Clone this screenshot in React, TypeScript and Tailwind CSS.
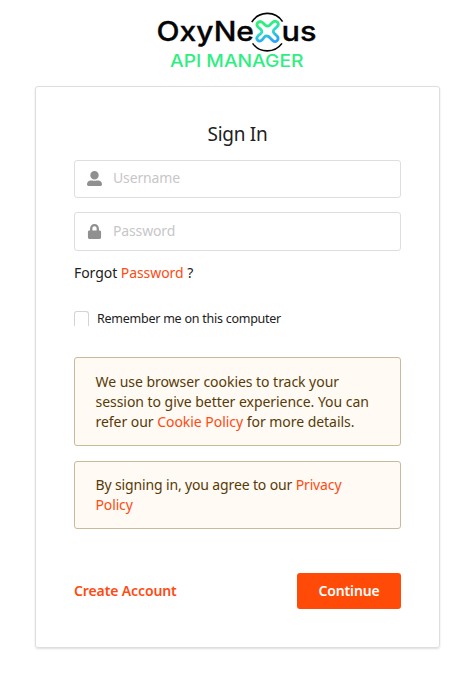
import { useState } from 'react';
import type { InputHTMLAttributes, ReactNode } from 'react';
import { FaLock, FaUserAlt } from 'react-icons/fa';

interface FieldProps extends InputHTMLAttributes<HTMLInputElement> {
  icon: ReactNode;
}

const Logo = () => (
  <svg width="166" height="60" viewBox="154 11 166 60" role="img" aria-label="OxyNexus API Manager">
    <defs>
      <linearGradient id="xFill" gradientUnits="userSpaceOnUse" x1="265" y1="22" x2="270" y2="41">
        <stop offset="0.1" stopColor="#2df07c" />
        <stop offset="0.5" stopColor="#2cdcc8" />
        <stop offset="0.95" stopColor="#2ca4fa" />
      </linearGradient>
    </defs>
    <g fontFamily="Inter, sans-serif" fontWeight="500" fontSize="27.5" fill="#050505" stroke="#050505" strokeWidth="0.3">
      <text x="156.5" y="40.7" textLength="97.5" lengthAdjust="spacingAndGlyphs">OxyNe</text>
      <text x="281.5" y="40.7" textLength="35" lengthAdjust="spacingAndGlyphs">us</text>
    </g>
    <g fill="none" stroke="#050505" strokeWidth="1.6">
      <path d="M251.8 22.2A18.2 18.2 0 0 1 282.6 21.6" />
      <path d="M252.6 43.4A18.2 18.2 0 0 0 282 43.4" />
    </g>
    <path
      d="M265.2 36.2L261.9 40.1C259 43 254.9 39 258 35.9L260.8 33.5Q263 31.5 260.8 29.4L258.3 27.2C255 24 259.2 19.6 262.5 22.5L265.3 25.1Q267.5 27 269.8 25.1L273 22.1C276.2 19.4 280.3 23.6 277 26.9L274.4 29.2Q272.2 31.2 274.2 33.3L277 36.1C280.2 39.3 275.7 43.4 272.7 40.5L270.2 38Q268 35.4 265.2 36.2"
      fill="none"
      stroke="url(#xFill)"
      strokeWidth="2.8"
      strokeLinecap="round"
      strokeLinejoin="round"
    />
    <text
      x="170"
      y="66.8"
      textLength="133.5"
      lengthAdjust="spacingAndGlyphs"
      fontFamily="Inter, sans-serif"
      fontWeight="500"
      fontSize="17"
      fill="#2fee82"
    >
      API MANAGER
    </text>
  </svg>
);

const Field = ({ icon, ...rest }: FieldProps) => (
  <div className="flex items-center rounded-[3px] border border-[#dededf] bg-white">
    <span className="flex w-[38px] pb-px pl-3 text-[#909090]">{icon}</span>
    <input
      {...rest}
      className="h-full min-w-0 flex-1 bg-transparent pb-[3px] text-[14px] tracking-[-0.15px] outline-none placeholder:text-[#c7c7c7]"
    />
  </div>
);

const Notice = ({ children }: { children: ReactNode }) => (
  <div className="rounded-[3px] border border-[#c9ba9b] bg-[#fffaf3] px-[20.5px] text-[14px] leading-5 text-[#573a08]">
    {children}
  </div>
);

const Link = ({ children }: { children: ReactNode }) => (
  <a href="#" className="text-[#ff4a12]">{children}</a>
);

const App = () => {
  const [remember, setRemember] = useState(false);

  return (
    <main className="flex h-[681px] w-[473px] flex-col bg-white pt-[11px] font-['Noto_Sans',sans-serif] text-[#212121]">
      <div className="ml-[154px] h-[60px]">
        <Logo />
      </div>

      <form className="mt-[15px] ml-[35px] flex h-[562px] w-[405px] flex-col rounded-[3px] border border-[#dededf] px-[38px] pt-[35px] shadow-[0_1px_2px_0_rgba(34,36,38,0.15)]">
        <h1 className="h-[38px] text-center text-[19px] leading-6 tracking-[-0.3px]">Sign In</h1>

        <div className="grid grid-rows-[38px_39px] gap-3.5">
          <Field icon={<FaUserAlt size={15} />} type="text" placeholder="Username" />
          <Field icon={<FaLock size={15} />} type="password" placeholder="Password" />
        </div>

        <p className="mt-3 h-5 text-[14px] leading-5 tracking-[-0.06px]">
          Forgot <Link>Password</Link> ?
        </p>

        {/* Remember me */}
        <label className="mt-[26px] flex h-[18px] items-start text-[12.5px] leading-5 tracking-[-0.25px]">
          <input
            type="checkbox"
            checked={remember}
            onChange={() => setRemember(!remember)}
            className="mt-0.5 mr-2 h-[15px] w-[15px] appearance-none rounded-t-[3px] border border-b-0 border-[#d4d4d5] checked:bg-[#ff4a12]"
          />
          Remember me on this computer
        </label>

        {/* Policies */}
        <div className="mt-[30px] grid grid-rows-[89px_68px] gap-[15px]">
          <Notice>
            <p className="pt-3.5 tracking-[-0.04px]">
              We use browser cookies to track your<br />
              session to give better experience. You can<br />
              refer our <Link>Cookie Policy</Link> for more details.
            </p>
          </Notice>
          <Notice>
            <p className="pt-[13px] tracking-[-0.14px]">
              By signing in, you agree to our <Link>Privacy<br />Policy</Link>
            </p>
          </Notice>
        </div>

        <div className="mt-11 flex h-9 items-center justify-between text-[14px] font-semibold tracking-[-0.12px]">
          <a href="#" className="pb-0.5 text-[#ff4a12]">Create Account</a>
          <button type="button" className="h-9 w-[104px] rounded-[3px] bg-[#ff4a08] pb-0.5 tracking-[-0.12px] text-white">
            Continue
          </button>
        </div>
      </form>
    </main>
  );
};

export default App;
